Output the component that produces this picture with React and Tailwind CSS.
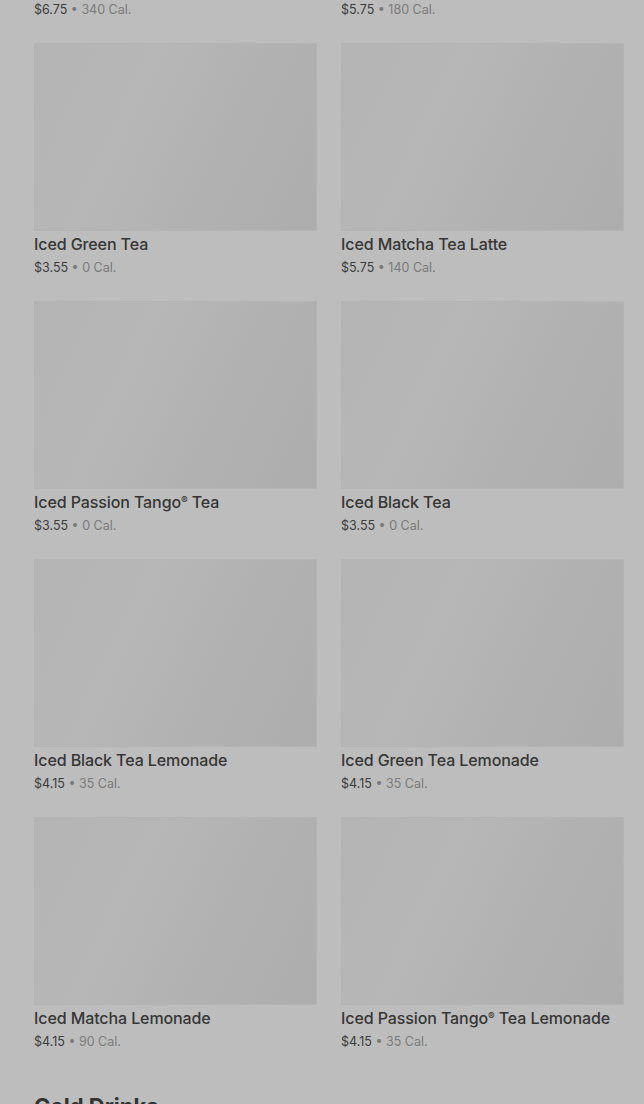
const items = [
  { name: 'Iced Chai Tea Latte', price: '$6.75', cal: '340 Cal.' },
  { name: 'Iced London Fog Latte', price: '$5.75', cal: '180 Cal.' },
  { name: 'Iced Green Tea', price: '$3.55', cal: '0 Cal.' },
  { name: 'Iced Matcha Tea Latte', price: '$5.75', cal: '140 Cal.' },
  { name: 'Iced Passion Tango® Tea', price: '$3.55', cal: '0 Cal.' },
  { name: 'Iced Black Tea', price: '$3.55', cal: '0 Cal.' },
  { name: 'Iced Black Tea Lemonade', price: '$4.15', cal: '35 Cal.' },
  { name: 'Iced Green Tea Lemonade', price: '$4.15', cal: '35 Cal.' },
  { name: 'Iced Matcha Lemonade', price: '$4.15', cal: '90 Cal.' },
  { name: 'Iced Passion Tango® Tea Lemonade', price: '$4.15', cal: '35 Cal.' },
];

function MenuCard({ name, price, cal }) {
  return (
    <div className="flex flex-col">
      <div className="h-[188px] w-full border border-[#b3b3b3] bg-[linear-gradient(115deg,#b4b4b4_0%,#b7b7b7_35%,#b2b2b2_60%,#adadad_100%)]" />
      <div className="mt-[1px] truncate text-[16px] font-medium leading-6 tracking-[-0.1px] text-[#363636]">
        {name.split('®').map((part, i, arr) => (
          <span key={i}>
            {part}
            {i < arr.length - 1 && <span className="align-[4px] text-[10px] leading-none">®</span>}
          </span>
        ))}
      </div>
      <div className="mt-[3px] text-[12.5px] leading-[18px] text-[#3c3c3c]">
        {price}
        <span className="text-[#7a7a7a]"> • {cal}</span>
      </div>
    </div>
  );
}

export default function App() {
  return (
    <div className="h-[1104px] w-[644px] overflow-hidden bg-[#bdbdbd]" style={{ fontFamily: 'Inter, "Liberation Sans", sans-serif' }}>
      <div className="-mt-[215px] pl-[34px] pr-[20px]">
        <div className="grid grid-cols-2 gap-x-[24px] gap-y-[24px]">
          {items.map((it) => (
            <MenuCard key={it.name} {...it} />
          ))}
        </div>
        <h2 className="mt-[39px] text-[22px] font-bold leading-8 text-[#333]">Cold Drinks</h2>
      </div>
    </div>
  );
}
